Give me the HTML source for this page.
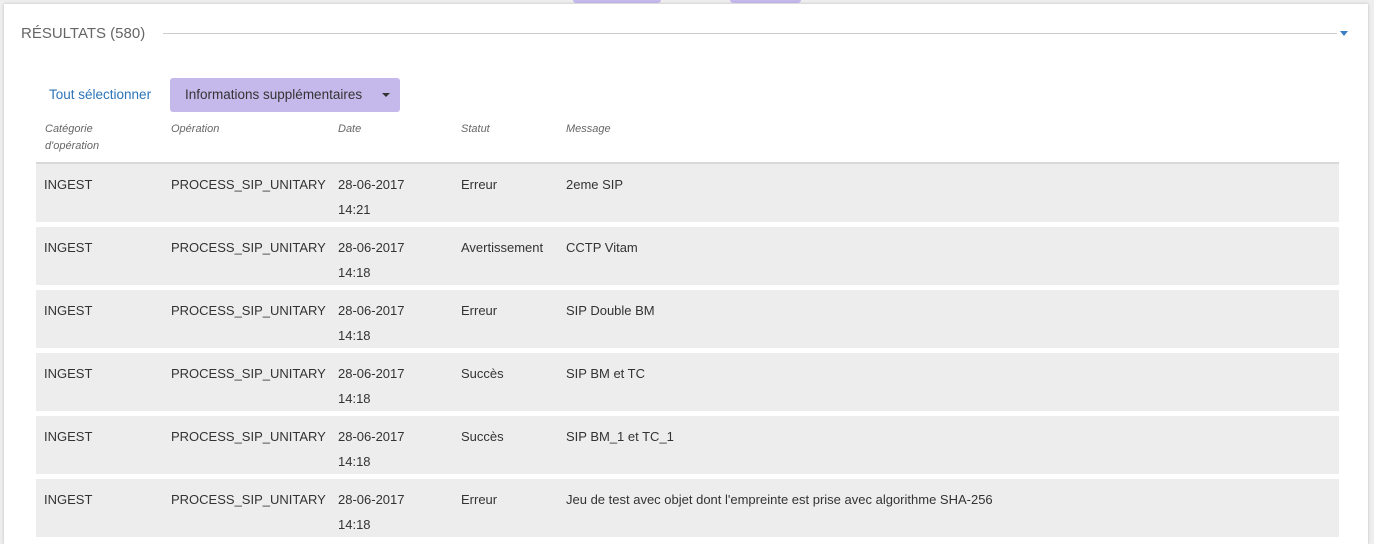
<!DOCTYPE html>
<html><head><meta charset="utf-8"><style>
body{margin:0;width:1374px;height:536px;background:#eee;position:relative;overflow:hidden;font-family:"Liberation Sans",sans-serif;}
.tab{position:absolute;top:0;height:3px;background:#c5b9ec;border-radius:0 0 3px 3px}
.panel{position:absolute;left:4px;top:4px;width:1364px;height:540px;background:#fff;box-shadow:0 0 3px rgba(0,0,0,.2)}
.title{position:absolute;left:17px;top:21px;font-size:15px;color:#666;letter-spacing:0}
.line{position:absolute;left:159px;top:29px;width:1174px;height:1px;background:#ccc}
.caret{position:absolute;left:1336px;top:27px;width:0;height:0;border-left:4px solid transparent;border-right:4px solid transparent;border-top:5px solid #3a7fc4}
.sel{position:absolute;left:45px;top:83px;font-size:13.5px;color:#2d74b8}
.btn{position:absolute;left:166px;top:74px;width:230px;height:34px;background:#c5b9ec;border-radius:3px;font-size:13.5px;color:#333;line-height:34px;box-sizing:border-box;padding-left:15px}
.btn:after{content:"";position:absolute;left:212px;top:15px;border-left:4px solid transparent;border-right:4px solid transparent;border-top:4px solid #333}
.h{position:absolute;top:117px;font-size:11px;font-style:italic;color:#666;line-height:17px}
.row{position:absolute;left:32px;width:1303px;height:58px;background:#ededed;font-size:13px;color:#333}
.row span{position:absolute;top:8px;line-height:25px}
</style></head><body>
<div class="tab" style="left:573px;width:88px"></div>
<div class="tab" style="left:730px;width:71px"></div>
<div class="panel">
<div class="title">RÉSULTATS (580)</div>
<div class="line"></div>
<div class="caret"></div>
<div class="sel">Tout sélectionner</div>
<div class="btn">Informations supplémentaires</div>
<div class="h" style="left:41px">Catégorie<br>d'opération</div>
<div class="h" style="left:167px">Opération</div>
<div class="h" style="left:334px">Date</div>
<div class="h" style="left:457px">Statut</div>
<div class="h" style="left:562px">Message</div>
<div style="position:absolute;left:32px;top:158px;width:1303px;height:2px;background:#d8d8d8"></div>
<div class="row" style="top:160px"><span style="left:8px">INGEST</span><span style="left:135px">PROCESS_SIP_UNITARY</span><span style="left:302px">28-06-2017<br>14:21</span><span style="left:425px">Erreur</span><span style="left:530px">2eme SIP</span></div>
<div class="row" style="top:223px"><span style="left:8px">INGEST</span><span style="left:135px">PROCESS_SIP_UNITARY</span><span style="left:302px">28-06-2017<br>14:18</span><span style="left:425px">Avertissement</span><span style="left:530px">CCTP Vitam</span></div>
<div class="row" style="top:286px"><span style="left:8px">INGEST</span><span style="left:135px">PROCESS_SIP_UNITARY</span><span style="left:302px">28-06-2017<br>14:18</span><span style="left:425px">Erreur</span><span style="left:530px">SIP Double BM</span></div>
<div class="row" style="top:349px"><span style="left:8px">INGEST</span><span style="left:135px">PROCESS_SIP_UNITARY</span><span style="left:302px">28-06-2017<br>14:18</span><span style="left:425px">Succès</span><span style="left:530px">SIP BM et TC</span></div>
<div class="row" style="top:412px"><span style="left:8px">INGEST</span><span style="left:135px">PROCESS_SIP_UNITARY</span><span style="left:302px">28-06-2017<br>14:18</span><span style="left:425px">Succès</span><span style="left:530px">SIP BM_1 et TC_1</span></div>
<div class="row" style="top:475px"><span style="left:8px">INGEST</span><span style="left:135px">PROCESS_SIP_UNITARY</span><span style="left:302px">28-06-2017<br>14:18</span><span style="left:425px">Erreur</span><span style="left:530px">Jeu de test avec objet dont l'empreinte est prise avec algorithme SHA-256</span></div>
</div>
</body></html>
